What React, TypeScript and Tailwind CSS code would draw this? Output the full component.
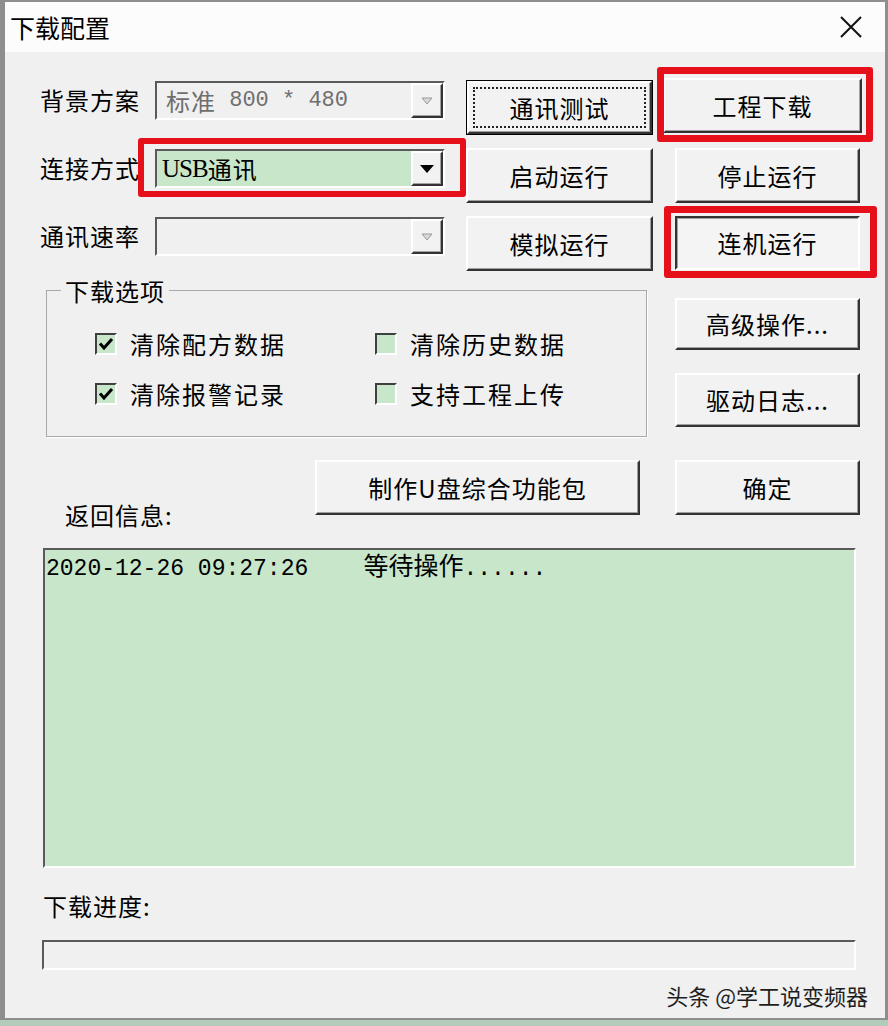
import type { ReactNode } from "react"

const cjk = "font-['Noto_Sans_CJK_SC','Noto_Sans_CJK_JP',sans-serif]"
const mono = "font-['Liberation_Mono','Noto_Sans_CJK_SC',monospace]"

const raised =
  "border-2 border-t-white border-l-white border-r-[#333] border-b-[#333] shadow-[inset_-1px_-1px_0_#a0a0a0] bg-[#f2f2f2]"
const pressed =
  "border-2 border-t-[#333] border-l-[#333] border-r-white border-b-white shadow-[inset_1px_1px_0_#a0a0a0] bg-[#f4f4f4]"
const sunken = "border-2 border-t-[#5a5a5a] border-l-[#5a5a5a] border-r-white border-b-white"

function Btn({
  children,
  className = "",
  variant = "raised",
}: {
  children: ReactNode
  className?: string
  variant?: "raised" | "pressed" | "default"
}) {
  if (variant === "default") {
    return (
      <div className={`border border-black ${className}`}>
        <div className={`${raised} h-full w-full p-[4px]`}>
          <div className="h-full w-full border-2 border-dotted border-[#222] flex items-center justify-center text-[24px] tracking-[1px] leading-none text-black">
            {children}
          </div>
        </div>
      </div>
    )
  }
  return (
    <div
      className={`${variant === "pressed" ? pressed : raised} flex items-center justify-center text-[24px] tracking-[1px] leading-none text-black ${className}`}
    >
      {children}
    </div>
  )
}

function Combo({ children, green = false, disabled = false }: { children?: ReactNode; green?: boolean; disabled?: boolean }) {
  return (
    <div className={`${sunken} w-[290px] h-[39px] mt-[1px] flex ${green ? "bg-[#c7e6ca]" : "bg-[#f0f0f0]"}`}>
      <div className={`flex-1 flex items-center pl-[5px] leading-none ${disabled ? "text-[#6e6e6e]" : "text-black"}`}>
        {children}
      </div>
      <div className={`${raised} w-[32px] h-full flex items-center justify-center`}>
        {disabled ? (
          <svg width="12" height="8" viewBox="0 0 12 8">
            <path d="M1 1 L11 1 L6 7 Z" fill="#d8d8d8" stroke="#9a9a9a" strokeWidth="1" />
          </svg>
        ) : (
          <svg width="14" height="8" viewBox="0 0 14 8">
            <path d="M0 0 L14 0 L7 8 Z" fill="#000" />
          </svg>
        )}
      </div>
    </div>
  )
}

function Check({ label, checked }: { label: string; checked: boolean }) {
  return (
    <div className="flex items-center gap-[13px] h-[26px]">
      <div className="w-[22px] h-[22px] border-2 border-t-[#404040] border-l-[#404040] border-r-white border-b-white bg-[#c7e6ca] flex items-center justify-center">
        {checked && (
          <svg width="16" height="16" viewBox="0 0 16 16">
            <path d="M2 7.5 L6 12 L14 3" fill="none" stroke="#000" strokeWidth="3" />
          </svg>
        )}
      </div>
      <span className="text-[24px] tracking-[2px] leading-none text-black">{label}</span>
    </div>
  )
}

export default function App() {
  return (
    <div className={`relative w-[888px] h-[1026px] bg-[#b3cbbb] overflow-hidden ${cjk}`}>
      <div className="h-[1020px] border-l-[5px] border-r-[3px] border-t-2 border-b-2 border-[#8e8e8e] bg-[#f0f0f0] flex flex-col">
        {/* title bar */}
        <div className="h-[50px] shrink-0 bg-[#fcfcfc] flex items-center justify-between pl-[5px] pr-[23px]">
          <span className="text-[25px] leading-none text-black">下载配置</span>
          <svg width="22" height="22" viewBox="0 0 22 22">
            <path d="M1 1 L21 21 M21 1 L1 21" stroke="#111" strokeWidth="2" />
          </svg>
        </div>

        {/* top rows */}
        <div className="mt-[28px] flex flex-col gap-[14px]">
          <div className="flex items-start h-[54px]">
            <span className="ml-[35px] w-[115px] h-[40px] flex items-center text-[24px] tracking-[1px] leading-none">背景方案</span>
            <Combo disabled>
              <span className="pl-[4px] text-[24px] tracking-[1px]">标准</span>
              <span className={`${mono} text-[22px] whitespace-pre`}> 800 * 480</span>
            </Combo>
            <Btn variant="default" className="ml-[21px] w-[187px] h-[55px]">通讯测试</Btn>
            <Btn className="ml-[10px] w-[199px] h-[55px] -mt-[2px]">工程下载</Btn>
          </div>
          <div className="flex items-start h-[54px]">
            <span className="ml-[35px] w-[115px] h-[40px] flex items-center text-[24px] tracking-[1px] leading-none">连接方式</span>
            <Combo green>
              <span className="font-['Liberation_Serif',serif] text-[25px] tracking-[-1px]">USB</span>
              <span className="text-[24px] tracking-[1px]">通讯</span>
            </Combo>
            <Btn className="ml-[21px] w-[187px] h-[55px]">启动运行</Btn>
            <Btn className="ml-[22px] w-[185px] h-[55px]">停止运行</Btn>
          </div>
          <div className="flex items-start h-[54px]">
            <span className="ml-[35px] w-[115px] h-[40px] flex items-center text-[24px] tracking-[1px] leading-none">通讯速率</span>
            <Combo disabled />
            <Btn className="ml-[21px] w-[187px] h-[55px]">模拟运行</Btn>
            <Btn variant="pressed" className="ml-[22px] w-[185px] h-[54px]">连机运行</Btn>
          </div>
        </div>

        {/* options group + side buttons */}
        <div className="mt-[8px] flex items-start">
          <fieldset className="ml-[41px] w-[601px] h-[159px] border border-[#a8a8a8] shadow-[1px_1px_0_#fff]">
            <legend className="ml-[14px] px-[4px] text-[24px] tracking-[1px] leading-[25px]">下载选项</legend>
            <div className="mt-[28px] pl-[48px] grid grid-cols-[280px_1fr] gap-y-[24px]">
              <Check label="清除配方数据" checked />
              <Check label="清除历史数据" checked={false} />
              <Check label="清除报警记录" checked />
              <Check label="支持工程上传" checked={false} />
            </div>
          </fieldset>
          <div className="ml-[28px] mt-[20px] flex flex-col gap-[23px]">
            <Btn className="w-[185px] h-[52px]">高级操作...</Btn>
            <Btn className="w-[185px] h-[54px]">驱动日志...</Btn>
          </div>
        </div>

        {/* U disk row */}
        <div className="mt-[23px] h-[67px] flex items-start">
          <span className="ml-[60px] w-[250px] self-end text-[24px] tracking-[1px] leading-[25px]">返回信息:</span>
          <Btn className="w-[325px] h-[55px]">制作U盘综合功能包</Btn>
          <Btn className="ml-[35px] w-[185px] h-[55px]">确定</Btn>
        </div>

        {/* log */}
        <div className={`mt-[21px] ml-[38px] w-[813px] h-[320px] shrink-0 ${sunken} bg-[#c7e6ca] pl-[1px] pt-[1px]`}>
          <div className={`${mono} text-[23px] leading-[26px] whitespace-pre text-black`}>
            2020-12-26 09:27:26    <span className={`${cjk} text-[25px]`}>等待操作</span>......
          </div>
        </div>

        <div className="mt-[25px] ml-[38px] text-[24px] tracking-[1px] leading-[25px]">下载进度:</div>

        <div className={`mt-[22px] ml-[37px] w-[814px] h-[30px] shrink-0 ${sunken} bg-[#f0f0f0]`} />

        <div className="mt-[12px] mr-[17px] self-end text-[22px] leading-[26px] text-[#1e1e1e]">头条 @学工说变频器</div>
      </div>

      {/* red annotation frames */}
      <div className="absolute left-[138px] top-[138px] w-[328px] h-[59px] border-[6px] border-[#e5101a] rounded-[3px]" />
      <div className="absolute left-[657px] top-[67px] w-[216px] h-[75px] border-[7px] border-[#e5101a] rounded-[3px]" />
      <div className="absolute left-[664px] top-[206px] w-[213px] h-[72px] border-[7px] border-[#e5101a] rounded-[3px]" />
    </div>
  )
}
